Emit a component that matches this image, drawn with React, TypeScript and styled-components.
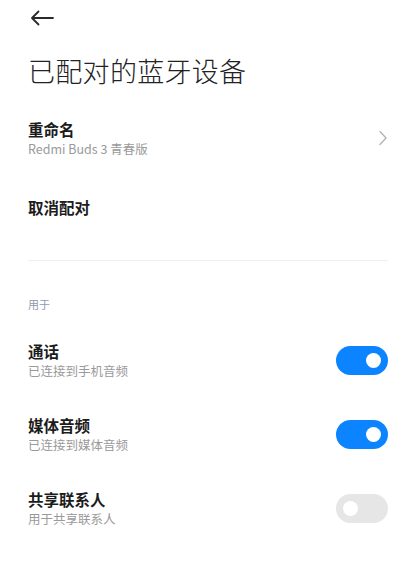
import React, { useState } from 'react';
import styled, { createGlobalStyle } from 'styled-components';

const GlobalStyle = createGlobalStyle`
  html, body {
    margin: 0;
    padding: 0;
    background: #ffffff;
  }
  body {
    font-family: "Noto Sans CJK SC", "Noto Sans", Roboto, sans-serif;
    -webkit-font-smoothing: antialiased;
  }
`;

const Page = styled.div`
  width: 416px;
  min-height: 575px;
  box-sizing: border-box;
  padding: 0 28px;
  background: #fff;
  color: #1a1a1a;
`;

const Header = styled.div`
  height: 36px;
  display: flex;
  align-items: center;
`;

const BackButton = styled.button`
  border: 0;
  background: none;
  padding: 0;
  margin-left: 2px;
  display: flex;
  cursor: pointer;
`;

const Title = styled.h1`
  margin: 16px 0 0;
  font-size: 27px;
  line-height: 38px;
  font-weight: 300;
  color: #222;
  letter-spacing: 0.3px;
`;

const Row = styled.div<{ $top: number; $bottom?: number }>`
  display: flex;
  align-items: center;
  justify-content: space-between;
  padding-top: ${(p) => p.$top}px;
  padding-bottom: ${(p) => p.$bottom ?? 0}px;
`;

const Texts = styled.div`
  display: flex;
  flex-direction: column;
`;

const ItemTitle = styled.div`
  font-size: 15.5px;
  line-height: 22px;
  font-weight: 700;
  color: #1c1c1c;
`;

const ItemSub = styled.div`
  font-size: 12.5px;
  line-height: 18px;
  color: #9a9a9a;
`;

const Divider = styled.div`
  height: 1px;
  background: #eeeeee;
  margin-top: 42px;
`;

const SectionLabel = styled.div`
  margin-top: 35px;
  font-size: 11px;
  line-height: 16px;
  color: #8e9ab3;
`;

const ToggleList = styled.div`
  margin-top: 11px;
`;

const Track = styled.button<{ $on: boolean }>`
  width: 52px;
  height: 29px;
  border: 0;
  padding: 0;
  border-radius: 15px;
  background: ${(p) => (p.$on ? '#0d84ff' : '#e6e6e6')};
  display: flex;
  align-items: center;
  justify-content: ${(p) => (p.$on ? 'flex-end' : 'flex-start')};
  cursor: pointer;
  flex-shrink: 0;
`;

const Knob = styled.span<{ $on: boolean }>`
  width: 15px;
  height: 15px;
  border-radius: 50%;
  background: #fff;
  margin: 0 ${(p) => (p.$on ? '7px' : '0')} 0 ${(p) => (p.$on ? '0' : '7px')};
`;

const Chevron = () => (
  <svg width="10" height="16" viewBox="0 0 10 16">
    <path d="M2 1.5 L8 8 L2 14.5" fill="none" stroke="#b4b4b4" strokeWidth="1.4" strokeLinecap="round" strokeLinejoin="round" />
  </svg>
);

const BackArrow = () => (
  <svg width="24" height="16" viewBox="0 0 24 16">
    <path d="M23 8 H2 M8.5 1.5 L2 8 L8.5 14.5" fill="none" stroke="#2a2a2a" strokeWidth="1.8" strokeLinecap="round" strokeLinejoin="round" />
  </svg>
);

const Toggle: React.FC<{ initial: boolean }> = ({ initial }) => {
  const [on, setOn] = useState(initial);
  return (
    <Track $on={on} onClick={() => setOn(!on)} aria-pressed={on}>
      <Knob $on={on} />
    </Track>
  );
};

const options = [
  { title: '通话', sub: '已连接到手机音频', on: true },
  { title: '媒体音频', sub: '已连接到媒体音频', on: true },
  { title: '共享联系人', sub: '用于共享联系人', on: false },
];

export default function App() {
  return (
    <>
      <GlobalStyle />
      <Page>
        <Header>
          <BackButton aria-label="返回">
            <BackArrow />
          </BackButton>
        </Header>
        <Title>已配对的蓝牙设备</Title>

        <Row $top={28}>
          <Texts>
            <ItemTitle>重命名</ItemTitle>
            <ItemSub>Redmi Buds 3 青春版</ItemSub>
          </Texts>
          <Chevron />
        </Row>

        <Row $top={38}>
          <ItemTitle>取消配对</ItemTitle>
        </Row>

        <Divider />
        <SectionLabel>用于</SectionLabel>

        <ToggleList>
          {options.map((o) => (
            <Row key={o.title} $top={17} $bottom={17}>
              <Texts>
                <ItemTitle>{o.title}</ItemTitle>
                <ItemSub>{o.sub}</ItemSub>
              </Texts>
              <Toggle initial={o.on} />
            </Row>
          ))}
        </ToggleList>
      </Page>
    </>
  );
}
